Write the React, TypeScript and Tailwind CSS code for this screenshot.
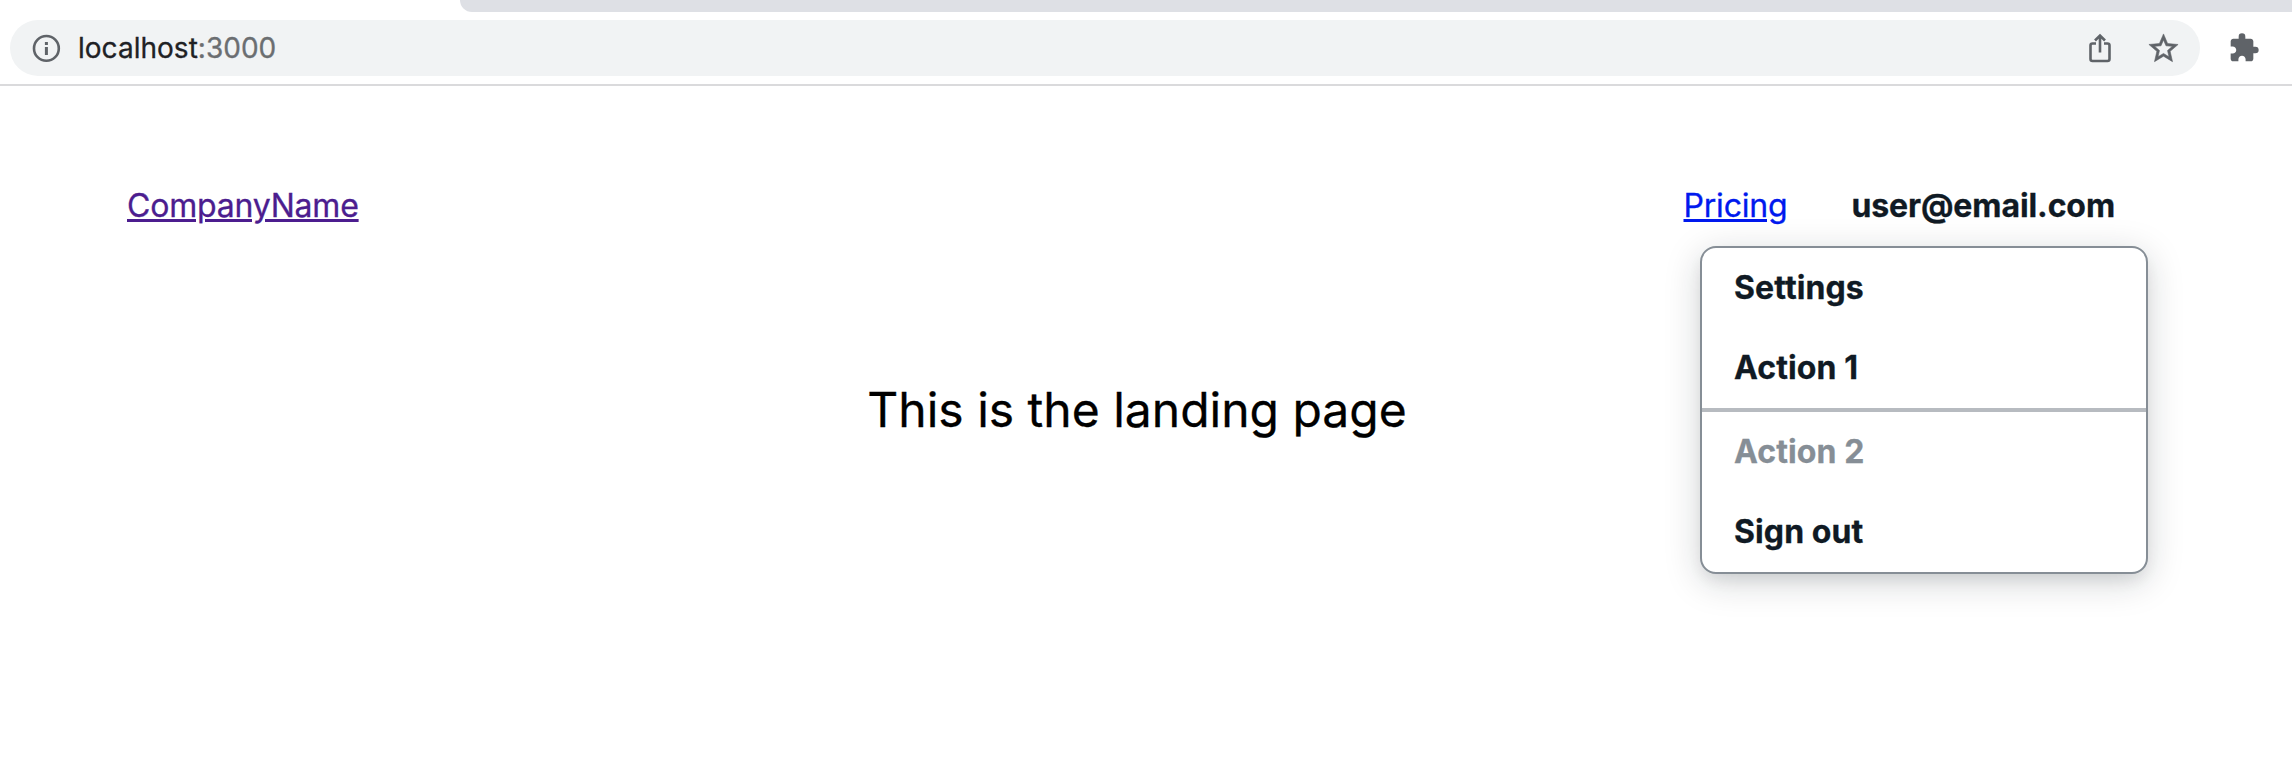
import React from "react";

function InfoIcon() {
  return (
    <svg viewBox="0 0 32 32" className="size-8 shrink-0" fill="none" stroke="#5f6368">
      <circle cx="16.400" cy="16.400" r="12.400" strokeWidth="2.600" />
      <path d="M16.400 15v8M16.400 10v3" strokeWidth="3" />
    </svg>
  );
}

function ShareIcon() {
  return (
    <svg viewBox="0 0 32 32" className="size-8 shrink-0" fill="none" stroke="#5f6368" strokeWidth="2.6">
      <path d="M12 11.500H8.500a2 2 0 0 0-2 2V27a2 2 0 0 0 2 2h15a2 2 0 0 0 2-2V13.500a2 2 0 0 0-2-2H20M16 20.500V4M11 8.500l5-5 5 5" />
    </svg>
  );
}

function StarIcon() {
  return (
    <svg viewBox="0 0 24 24" className="h-[35px] w-[35px] shrink-0" fill="#5f6368" stroke="#5f6368" strokeWidth="0.4">
      <path d="M22 9.240l-7.190-.62L12 2 9.190 8.630 2 9.240l5.460 4.730L5.820 21 12 17.270 18.180 21l-1.630-7.030L22 9.240zM12 15.400l-3.760 2.270 1-4.280-3.320-2.880 4.380-.38L12 6.100l1.710 4.040 4.380.38-3.320 2.880 1 4.280L12 15.400z" />
    </svg>
  );
}

function PuzzleIcon() {
  return (
    <svg viewBox="0 0 24 24" className="size-8 shrink-0" fill="#5f6368">
      <path d="M20.500 11H19V7c0-1.100-.9-2-2-2h-4V3.500a2.500 2.500 0 0 0-5 0V5H4c-1.100 0-1.990.9-1.990 2v3.800H3.500c1.490 0 2.700 1.210 2.700 2.700s-1.210 2.700-2.700 2.700H2V20c0 1.100.9 2 2 2h3.800v-1.500c0-1.490 1.210-2.700 2.700-2.700s2.700 1.210 2.700 2.700V22H17c1.100 0 2-.9 2-2v-4h1.500a2.500 2.500 0 0 0 0-5z" />
    </svg>
  );
}

function MenuItem({ label, disabled = false }: { label: string; disabled?: boolean }) {
  return (
    <button
      type="button"
      role="menuitem"
      disabled={disabled}
      className={
        disabled
          ? "flex h-20 w-full items-center px-8 text-[#868e96]"
          : "flex h-20 w-full items-center px-8 text-[#101a24]"
      }
    >
      {label}
    </button>
  );
}

export default function App() {
  return (
    <div className="h-[762px] w-[2292px] overflow-hidden bg-white font-['Inter',sans-serif] text-[32px] leading-10 [-webkit-text-stroke:0.3px_currentColor] [font-feature-settings:'calt'_0,'dlig'_0,'liga'_0]">
      <header className="border-b-2 border-[#dadadc]">
        <div className="ml-[460px] h-3 rounded-bl-2xl bg-[#dee0e5]" />
        <div className="flex h-[72px] items-center pl-2.5">
          <div className="flex h-14 w-[2190px] items-center rounded-full bg-[#f1f3f4] pr-[19px] pl-5">
            <InfoIcon />
            <div className="ml-4 grow text-[28px] tracking-[0.02px] text-[#202124]">
              localhost<span className="text-[#6b6e71]">:3000</span>
            </div>
            <ShareIcon />
            <div className="ml-[30px] flex">
              <StarIcon />
            </div>
          </div>
          <div className="ml-[28px]">
            <PuzzleIcon />
          </div>
        </div>
      </header>

      <nav className="flex items-center justify-between pt-[100px] pr-[177px] pl-[127px]">
        <a href="#" className="tracking-[-0.2px] text-[#4c1d8f] underline decoration-[3px]">
          CompanyName
        </a>
        <div className="flex items-center gap-16">
          <a href="#" className="tracking-[-0.2px] text-[#0019ee] underline decoration-[3px]">
            Pricing
          </a>
          <div className="relative font-bold text-[#101a24]">
            <button type="button" className="tracking-[-0.1px]">user@email.com</button>
            <div
              role="menu"
              className="absolute top-[60px] -right-[33px] w-[448px] rounded-2xl border-2 border-[#868e96] bg-white tracking-[0.1px] shadow-[0_8px_36px_rgba(16,26,36,0.18),0_8px_16px_-4px_rgba(16,26,36,0.1)]"
            >
              <MenuItem label="Settings" />
              <MenuItem label="Action 1" />
              <div className="h-1 bg-[#b7bbc0]" />
              <MenuItem label="Action 2" disabled />
              <MenuItem label="Sign out" />
            </div>
          </div>
        </div>
      </nav>

      <main className="pt-[152px] pr-[18px] text-center text-5xl leading-[64px] text-black">
        This is the landing page
      </main>
    </div>
  );
}
